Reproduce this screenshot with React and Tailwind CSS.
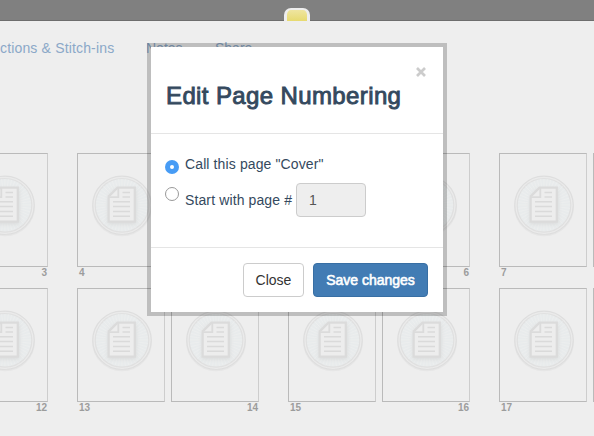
import React from "react";

const spreads = [
  [["", "3"], ["4", ""], ["", "6"], ["7", ""]],
  [["", "12"], ["13", "14"], ["15", "16"], ["17", ""]],
];

const rays = Array.from({ length: 48 }, (_, i) => {
  const a = (i * Math.PI) / 24;
  return `M${30 + 16 * Math.cos(a)} ${30 + 16 * Math.sin(a)}L${30 + 26 * Math.cos(a)} ${30 + 26 * Math.sin(a)}`;
}).join("");

function PageSeal() {
  return (
    <svg viewBox="0 0 60 60" className="h-[60px] w-[60px] shrink-0 overflow-visible" fill="none">
      <defs>
        <filter id="soft" x="-30%" y="-30%" width="160%" height="160%">
          <feGaussianBlur stdDeviation="2" />
        </filter>
      </defs>
      <circle cx="30" cy="31.2" r="29" stroke="#e6e6e6" strokeWidth="2" />
      <circle cx="30" cy="30.3" r="29.2" fill="#ebebeb" stroke="#dedede" strokeWidth="1.2" />
      <circle cx="30" cy="30.3" r="26.8" fill="#e8ebec" stroke="#e0e0e0" strokeWidth="1.2" />
      <path d={rays} stroke="#edefef" strokeWidth="0.8" />
      <path d="M17 21 24 14H44V49H16z" fill="#d8d9d9" filter="url(#soft)" />
      <path d="M25.5 12.7H42.8V46.7H16.7V21.5z" fill="#ededed" stroke="#dbdbdb" strokeWidth="2.2" />
      <path d="M26.3 13V22.2H17" stroke="#dbdbdb" strokeWidth="1.8" />
      <path d="M30.5 17.4H38M30.5 22H38M21 26.8H38M21 31.5H38M21 36.4H38M21 41.2H38" stroke="#dadada" strokeWidth="1.5" />
    </svg>
  );
}

function Page({ label, right }) {
  return (
    <div className="w-[88px]">
      <div className="flex h-[114px] items-center border border-[#bababa] border-r-[#cdcdcd] pb-[10px] pl-[14px]">
        <PageSeal />
      </div>
      <div className={`h-[21px] px-[2px] text-[10px] leading-[12px] font-bold text-[#9c9c9c] ${right ? "pr-[1px] text-right" : ""}`}>
        {label}
      </div>
    </div>
  );
}

function EditDialog() {
  return (
    <div role="dialog" className="absolute top-[43px] left-[147px] h-[273px] w-[300px] border-4 border-black/20 bg-white bg-clip-padding text-[14px] text-[#34495e]">
      <div className="h-[87px] border-b border-[#e5e5e5] px-[15px] pt-[15px]">
        <div className="flex h-[18px] justify-end">
          <button aria-label="Close dialog" className="mr-[2px] flex h-[20px] w-[10px] items-center justify-center">
            <svg viewBox="0 0 10 10" className="h-[10px] w-[10px]" stroke="#cccccc" strokeWidth="2.7">
              <path d="M1 1 9 9M9 1 1 9" />
            </svg>
          </button>
        </div>
        <h4 className="text-[24px] leading-[32px] whitespace-nowrap tracking-[0.38px] [-webkit-text-stroke:0.9px_#34495e]">Edit Page Numbering</h4>
      </div>
      <div className="h-[113px] px-[14px] pt-[20px]">
        <label className="flex h-[20px] items-center tracking-[0.12px]">
          <span className="mt-[5px] mr-[6px] flex h-[14px] w-[14px] items-center justify-center rounded-full bg-[#479cf5]">
            <span className="h-[4px] w-[4px] rounded-full bg-white" />
          </span>
          Call this page "Cover"
        </label>
        <label className="mt-[9px] flex h-[34px] items-center">
          <span className="mr-[6px] mb-[12px] h-[14px] w-[14px] rounded-full border border-[#999] bg-white" />
          <span className="w-[107px] whitespace-nowrap tracking-[0.12px]">Start with page #</span>
          <span className="ml-[4px] flex h-[34px] w-[70px] items-center rounded-[4px] border border-[#ccc] bg-[#eee] pl-[12px] text-[#555]">1</span>
        </label>
      </div>
      <div className="flex h-[65px] justify-end gap-[9px] border-t border-[#e5e5e5] px-[15px] pt-[15px]">
        <button className="h-[34px] w-[61px] rounded-[4px] border border-[#ccc] bg-white text-[#333]">Close</button>
        <button className="h-[34px] w-[115px] rounded-[4px] border border-[#386fa4] bg-[#427cb4] whitespace-nowrap text-white [-webkit-text-stroke:0.6px_#fff]">Save changes</button>
      </div>
    </div>
  );
}

export default function App() {
  return (
    <div className="relative h-[436px] w-[594px] overflow-hidden bg-[#eeeeee] font-['Liberation_Sans',Arial,sans-serif]">
      <header className="flex h-[21px] items-end border-b border-[#6d6d6d] bg-[#808080] pl-[284px]">
        <div className="-mb-px h-[13px] w-[26px] rounded-t-[7px] border-[3px] border-t-2 border-b-0 border-[#eeeeee] bg-linear-to-b from-[#efe5a0] to-[#e7da70]" />
      </header>
      <nav className="flex h-[132px] pt-[17px] text-[14px] leading-[20px] text-[#8ba8c8]">
        <span className="w-[146px] whitespace-nowrap tracking-[0.16px]">ctions &amp; Stitch-ins</span>
        <span className="w-[69px]">Notes</span>
        <span>Share</span>
      </nav>
      {spreads.map((row, r) => (
        <div key={r} className="-ml-[134px] flex w-[900px] gap-[29px]">
          {row.map(([a, b], i) => (
            <div key={i} className="flex shrink-0 gap-[6px]">
              <Page label={a} />
              <Page label={b} right />
            </div>
          ))}
        </div>
      ))}
      <EditDialog />
    </div>
  );
}
